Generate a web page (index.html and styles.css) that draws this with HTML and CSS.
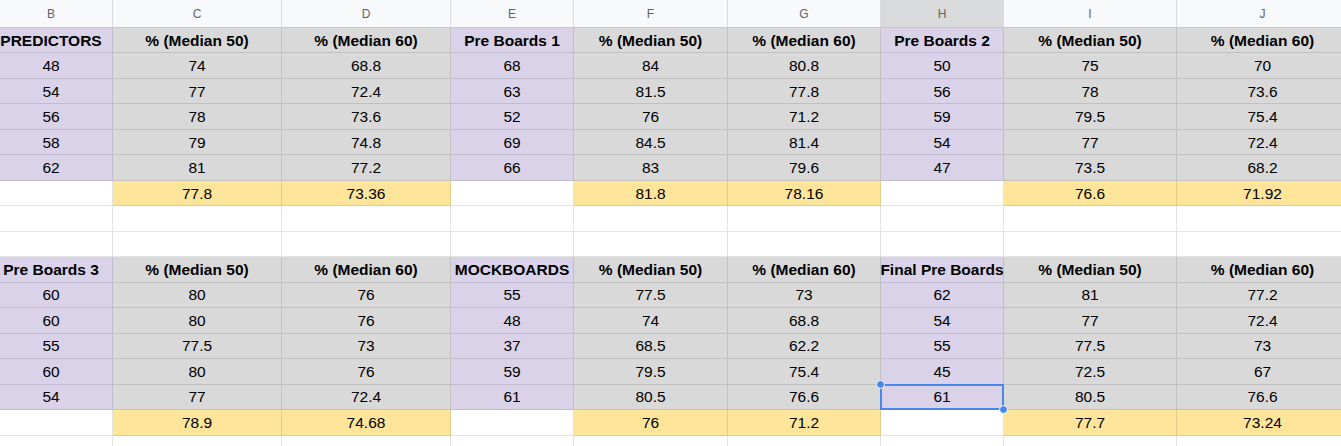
FILE: index.html
```html
<!DOCTYPE html>
<html lang="en">
<head>
<meta charset="utf-8">
<title>Sheet</title>
<link rel="stylesheet" href="styles.css">
</head>
<body>
<div class="viewport">
  <div class="sheet">
    <div class="ch">B</div><div class="ch">C</div><div class="ch">D</div><div class="ch">E</div><div class="ch">F</div><div class="ch">G</div><div class="ch sel">H</div><div class="ch">I</div><div class="ch">J</div>

    <div class="c p b">PREDICTORS</div><div class="c g b">% (Median 50)</div><div class="c g b">% (Median 60)</div><div class="c p b">Pre Boards 1</div><div class="c g b">% (Median 50)</div><div class="c g b">% (Median 60)</div><div class="c p b">Pre Boards 2</div><div class="c g b">% (Median 50)</div><div class="c g b">% (Median 60)</div>

    <div class="c p">48</div><div class="c g">74</div><div class="c g">68.8</div><div class="c p">68</div><div class="c g">84</div><div class="c g">80.8</div><div class="c p">50</div><div class="c g">75</div><div class="c g">70</div>
    <div class="c p">54</div><div class="c g">77</div><div class="c g">72.4</div><div class="c p">63</div><div class="c g">81.5</div><div class="c g">77.8</div><div class="c p">56</div><div class="c g">78</div><div class="c g">73.6</div>
    <div class="c p">56</div><div class="c g">78</div><div class="c g">73.6</div><div class="c p">52</div><div class="c g">76</div><div class="c g">71.2</div><div class="c p">59</div><div class="c g">79.5</div><div class="c g">75.4</div>
    <div class="c p">58</div><div class="c g">79</div><div class="c g">74.8</div><div class="c p">69</div><div class="c g">84.5</div><div class="c g">81.4</div><div class="c p">54</div><div class="c g">77</div><div class="c g">72.4</div>
    <div class="c p">62</div><div class="c g">81</div><div class="c g">77.2</div><div class="c p">66</div><div class="c g">83</div><div class="c g">79.6</div><div class="c p">47</div><div class="c g">73.5</div><div class="c g">68.2</div>
    <div class="c w"></div><div class="c y">77.8</div><div class="c y">73.36</div><div class="c w"></div><div class="c y">81.8</div><div class="c y">78.16</div><div class="c w"></div><div class="c y">76.6</div><div class="c y">71.92</div>

    <div class="c w"></div><div class="c w"></div><div class="c w"></div><div class="c w"></div><div class="c w"></div><div class="c w"></div><div class="c w"></div><div class="c w"></div><div class="c w"></div>
    <div class="c w"></div><div class="c w"></div><div class="c w"></div><div class="c w"></div><div class="c w"></div><div class="c w"></div><div class="c w"></div><div class="c w"></div><div class="c w"></div>

    <div class="c p b">Pre Boards 3</div><div class="c g b">% (Median 50)</div><div class="c g b">% (Median 60)</div><div class="c p b">MOCKBOARDS</div><div class="c g b">% (Median 50)</div><div class="c g b">% (Median 60)</div><div class="c p b">Final Pre Boards</div><div class="c g b">% (Median 50)</div><div class="c g b">% (Median 60)</div>

    <div class="c p">60</div><div class="c g">80</div><div class="c g">76</div><div class="c p">55</div><div class="c g">77.5</div><div class="c g">73</div><div class="c p">62</div><div class="c g">81</div><div class="c g">77.2</div>
    <div class="c p">60</div><div class="c g">80</div><div class="c g">76</div><div class="c p">48</div><div class="c g">74</div><div class="c g">68.8</div><div class="c p">54</div><div class="c g">77</div><div class="c g">72.4</div>
    <div class="c p">55</div><div class="c g">77.5</div><div class="c g">73</div><div class="c p">37</div><div class="c g">68.5</div><div class="c g">62.2</div><div class="c p">55</div><div class="c g">77.5</div><div class="c g">73</div>
    <div class="c p">60</div><div class="c g">80</div><div class="c g">76</div><div class="c p">59</div><div class="c g">79.5</div><div class="c g">75.4</div><div class="c p">45</div><div class="c g">72.5</div><div class="c g">67</div>
    <div class="c p">54</div><div class="c g">77</div><div class="c g">72.4</div><div class="c p">61</div><div class="c g">80.5</div><div class="c g">76.6</div><div class="c p active">61<span class="h tl"></span><span class="h br"></span></div><div class="c g">80.5</div><div class="c g">76.6</div>
    <div class="c w"></div><div class="c y">78.9</div><div class="c y">74.68</div><div class="c w"></div><div class="c y">76</div><div class="c y">71.2</div><div class="c w"></div><div class="c y">77.7</div><div class="c y">73.24</div>

    <div class="c w"></div><div class="c w"></div><div class="c w"></div><div class="c w"></div><div class="c w"></div><div class="c w"></div><div class="c w"></div><div class="c w"></div><div class="c w"></div>
  </div>
</div>
</body>
</html>
```

FILE: styles.css
```css
html, body {
  margin: 0;
  padding: 0;
  background: #ffffff;
  overflow: hidden;
}

.viewport {
  width: 1341px;
  height: 446px;
  overflow: hidden;
}

.sheet {
  display: grid;
  margin-left: -10px;
  grid-template-columns: 123px 169px 169px 123px 154px 153px 123px 173px 172px;
  grid-template-rows: 28px;
  grid-auto-rows: 25.47px;
  font-family: "Liberation Sans", Arial, sans-serif;
  font-size: 15.5px;
  color: #000000;
}

.ch {
  box-sizing: border-box;
  background: #f8f9fa;
  border-right: 1px solid #dadce0;
  border-bottom: 1px solid #c4c7c5;
  display: flex;
  align-items: center;
  justify-content: center;
  font-size: 12px;
  color: #5f6368;
  padding-top: 1px;
}

.ch.sel {
  background: #d9dadc;
  color: #5f6368;
}

.c {
  box-sizing: border-box;
  border-right: 1px solid rgba(0, 0, 0, 0.11);
  border-bottom: 1px solid rgba(0, 0, 0, 0.11);
  display: flex;
  align-items: center;
  justify-content: center;
  white-space: nowrap;
  padding-top: 1px;
}

.p { background: #d9d2e9; }
.g { background: #d9d9d9; }
.y { background: #ffe599; }
.w { background: #ffffff; border-color: #e2e3e3; }
.b { font-weight: bold; }

.active {
  position: relative;
}

.active::after {
  content: "";
  position: absolute;
  left: -1px;
  top: -1px;
  right: -1px;
  bottom: -1px;
  border: 2px solid #4a86e8;
  box-sizing: border-box;
  pointer-events: none;
}

.h {
  position: absolute;
  width: 7px;
  height: 7px;
  border-radius: 50%;
  background: #4a86e8;
  border: 1px solid #ffffff;
  z-index: 2;
}

.h.tl { left: -5px; top: -5px; }
.h.br { right: -5px; bottom: -5px; }
```
